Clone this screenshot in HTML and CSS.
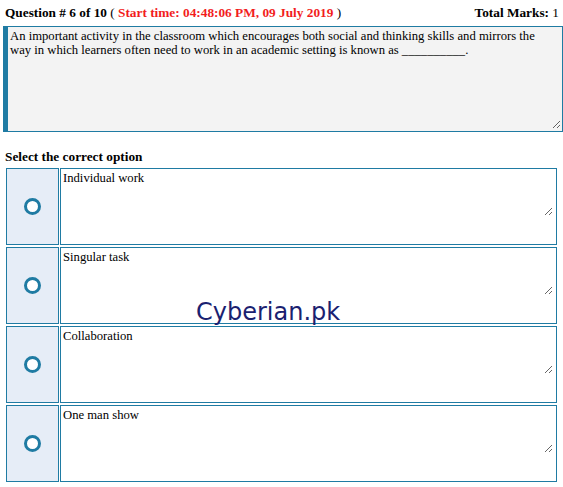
FILE: index.html
```html
<!DOCTYPE html>
<html>
<head>
<meta charset="utf-8">
<link rel="stylesheet" href="styles.css">
</head>
<body>
<div class="page">
  <div class="header">
    <div class="qnum"><b>Question # 6 of 10</b> ( <b class="time">Start time: 04:48:06 PM, 09 July 2019</b> )</div>
    <div class="marks"><b>Total Marks:</b> 1</div>
  </div>
  <div class="question">
    <textarea class="question-text" readonly>An important activity in the classroom which encourages both social and thinking skills and mirrors the way in which learners often need to work in an academic setting is known as __________.</textarea>
  </div>
  <div class="select">Select the correct option</div>
  <div class="options">
    <div class="radio-cell"><span class="radio"></span></div>
    <div class="answer-cell"><textarea class="answer" readonly>Individual work</textarea></div>
    <div class="radio-cell"><span class="radio"></span></div>
    <div class="answer-cell"><textarea class="answer" readonly>Singular task</textarea></div>
    <div class="radio-cell"><span class="radio"></span></div>
    <div class="answer-cell"><textarea class="answer" readonly>Collaboration</textarea></div>
    <div class="radio-cell"><span class="radio"></span></div>
    <div class="answer-cell"><textarea class="answer" readonly>One man show</textarea></div>
  </div>
  <div class="watermark">Cyberian.pk</div>
</div>
</body>
</html>
```
FILE: styles.css
```css
html, body {
  margin: 0;
  padding: 0;
  background: #ffffff;
}
.page {
  position: relative;
  width: 563px;
  height: 487px;
  font-family: "Liberation Serif", "Times New Roman", serif;
  font-size: 13px;
  color: #000;
}
.header {
  display: flex;
  justify-content: space-between;
  padding: 5px 4px 0 5px;
  height: 16px;
  line-height: 15px;
  font-size: 13.3px;
}
.time {
  color: #f21d1d;
}
.question {
  box-sizing: border-box;
  margin: 5px 0 0 3px;
  width: 560px;
  height: 106px;
  border: 1px solid #1f7ba3;
  border-left: 5px solid #1f7ba3;
  background: #f3f3f3;
  display: flex;
}
.question-text {
  display: block;
  box-sizing: border-box;
  width: 553px;
  height: 102px;
  margin: 0;
  border: none;
  background: transparent;
  font-family: "Liberation Serif", "Times New Roman", serif;
  font-size: 12.67px;
  line-height: 14px;
  padding: 2px 2px;
  color: #000;
  resize: both;
  outline: none;
}
.select {
  font-weight: bold;
  font-size: 13.3px;
  padding: 17px 0 0 5px;
  height: 19px;
  line-height: 15px;
}
.options {
  display: grid;
  grid-template-columns: 53px 497px;
  column-gap: 1px;
  row-gap: 2px;
  padding-left: 6px;
  grid-auto-rows: 77px;
}
.radio-cell {
  box-sizing: border-box;
  border: 1px solid #1f7ba3;
  background: #e6edf7;
  display: flex;
  align-items: center;
  justify-content: center;
}
.radio {
  box-sizing: border-box;
  width: 17px;
  height: 17px;
  border: 3px solid #1f7ba3;
  border-radius: 50%;
  background: #fff;
}
.answer-cell {
  box-sizing: border-box;
  border: 1px solid #1f7ba3;
  background: #fff;
}
.answer {
  display: block;
  box-sizing: border-box;
  width: 492px;
  height: 47px;
  margin: 0;
  border: none;
  background: transparent;
  font-family: "Liberation Serif", "Times New Roman", serif;
  font-size: 12.67px;
  line-height: 14px;
  padding: 2px 2px;
  color: #000;
  resize: both;
  outline: none;
}
.watermark {
  position: absolute;
  left: 196px;
  top: 298px;
  font-family: "DejaVu Sans", Verdana, sans-serif;
  font-size: 24px;
  line-height: 28px;
  color: #1a2170;
}
```
